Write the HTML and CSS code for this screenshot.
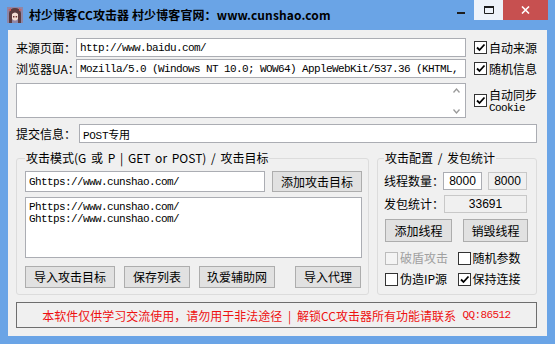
FILE: index.html
```html
<!DOCTYPE html>
<html lang="zh-CN">
<head>
<meta charset="UTF-8">
<title>村少博客CC攻击器</title>
<link rel="stylesheet" href="styles.css">
</head>
<body>
<div class="window">
  <div class="titlebar">
    <svg class="app-icon" viewBox="0 0 16 16">
      <rect width="16" height="16" fill="#8f86a6"/>
      <path d="M2 16 L2 6 Q3 1 8 1 Q13 1 14 6 L14 16 L11 16 L11 8 L5 8 L5 16 Z" fill="#5b3b3e"/>
      <path d="M5 7 Q8 4 11 7 L11 12 Q8 15 5 12 Z" fill="#f3dcd2"/>
      <rect x="6" y="9" width="1.5" height="1.5" fill="#6a3030"/>
      <rect x="8.6" y="9" width="1.5" height="1.5" fill="#6a3030"/>
      <path d="M1 3 L4 1 L4 4 Z" fill="#d65a5a"/>
      <path d="M12 1 L15 3 L12 4 Z" fill="#d65a5a"/>
    </svg>
    <span class="title">村少博客CC攻击器 村少博客官网：www.cunshao.com</span>
    <div class="caption">
      <div class="cap-btn cap-min">
        <svg width="8" height="2" viewBox="0 0 8 2"><rect width="8" height="2" fill="#1e1e1e"/></svg>
      </div>
      <div class="cap-btn cap-max">
        <svg width="10" height="8" viewBox="0 0 10 8"><path d="M0.5 1 H9.5 V7.5 H0.5 Z" fill="none" stroke="#1e1e1e"/><rect width="10" height="2" fill="#1e1e1e"/></svg>
      </div>
      <div class="cap-btn cap-close">
        <svg width="9" height="8" viewBox="0 0 9 8"><path d="M1 0.5 L8 7.5 M8 0.5 L1 7.5" stroke="#fff" stroke-width="1.6"/></svg>
      </div>
    </div>
  </div>

  <div class="client">
    <div class="field-row">
      <span class="label">来源页面：</span>
      <input class="text-input mono" type="text" value="http://www.baidu.com/">
      <label class="check">
        <span class="box"><svg viewBox="0 0 11 11"><path d="M2 5.5 L4.5 8 L9.5 2.5" fill="none" stroke="#000" stroke-width="1.8"/></svg></span>
        <span class="check-text">自动来源</span>
      </label>
    </div>
    <div class="field-row">
      <span class="label">浏览器UA：</span>
      <input class="text-input mono" type="text" value="Mozilla/5.0 (Windows NT 10.0; WOW64) AppleWebKit/537.36 (KHTML, like Gecko) Chrome/55.0.2883.87 Safari/537.36">
      <label class="check">
        <span class="box"><svg viewBox="0 0 11 11"><path d="M2 5.5 L4.5 8 L9.5 2.5" fill="none" stroke="#000" stroke-width="1.8"/></svg></span>
        <span class="check-text">随机信息</span>
      </label>
    </div>
    <div class="cookie-row">
      <div class="memo">
        <div class="memo-body"></div>
        <div class="memo-scroll">
          <svg width="7" height="5" viewBox="0 0 7 5"><path d="M0.5 4.5 L3.5 1 L6.5 4.5" fill="none" stroke="#9a9a9a" stroke-width="1.3"/></svg>
          <svg width="7" height="5" viewBox="0 0 7 5"><path d="M0.5 0.5 L3.5 4 L6.5 0.5" fill="none" stroke="#9a9a9a" stroke-width="1.3"/></svg>
        </div>
      </div>
      <label class="check">
        <span class="box"><svg viewBox="0 0 11 11"><path d="M2 5.5 L4.5 8 L9.5 2.5" fill="none" stroke="#000" stroke-width="1.8"/></svg></span>
        <span class="check-text two-line"><span class="main">自动同步</span><span class="mono sub">Cookie</span></span>
      </label>
    </div>
    <div class="field-row submit-row">
      <span class="label label-wide">提交信息：</span>
      <input class="text-input submit-input" type="text" value="POST专用">
    </div>

    <div class="groups">
      <fieldset class="group group-target">
        <legend>攻击模式(G 或 P | GET or POST) / 攻击目标</legend>
        <div class="target-row">
          <input class="text-input mono target-input" type="text" value="Ghttps://www.cunshao.com/">
          <button class="btn btn-add">添加攻击目标</button>
        </div>
        <div class="target-list mono">
          <div>Phttps://www.cunshao.com/</div>
          <div>Ghttps://www.cunshao.com/</div>
        </div>
        <div class="target-actions">
          <button class="btn btn-import">导入攻击目标</button>
          <button class="btn btn-save">保存列表</button>
          <button class="btn btn-site">玖爱辅助网</button>
          <button class="btn btn-proxy">导入代理</button>
        </div>
      </fieldset>

      <fieldset class="group group-config">
        <legend>攻击配置 / 发包统计</legend>
        <div class="config-row">
          <span class="label label-thread">线程数量：</span>
          <input class="num-input" type="text" value="8000">
          <input class="num-input readonly" type="text" value="8000" readonly>
        </div>
        <div class="config-row stat-row">
          <span class="label label-thread">发包统计：</span>
          <input class="num-input readonly stat-input" type="text" value="33691" readonly>
        </div>
        <div class="thread-actions">
          <button class="btn btn-thread">添加线程</button>
          <button class="btn btn-destroy">销毁线程</button>
        </div>
        <div class="option-row">
          <label class="check opt disabled">
            <span class="box"></span>
            <span class="check-text">破盾攻击</span>
          </label>
          <label class="check opt">
            <span class="box"></span>
            <span class="check-text">随机参数</span>
          </label>
        </div>
        <div class="option-row">
          <label class="check opt">
            <span class="box"></span>
            <span class="check-text">伪造IP源</span>
          </label>
          <label class="check opt">
            <span class="box"><svg viewBox="0 0 11 11"><path d="M2 5.5 L4.5 8 L9.5 2.5" fill="none" stroke="#000" stroke-width="1.8"/></svg></span>
            <span class="check-text">保持连接</span>
          </label>
        </div>
      </fieldset>
    </div>

    <div class="notice">本软件仅供学习交流使用，请勿用于非法途径 | 解锁CC攻击器所有功能请联系 <span class="mono qq">QQ:86512</span></div>
  </div>
</div>
</body>
</html>
```

FILE: styles.css
```css
* {
    box-sizing: border-box;
}
body {
    margin: 0;
    font-family: "Noto Sans CJK SC", "Noto Sans", sans-serif;
    font-size: 12px;
    color: #000;
}
.window {
    width: 555px;
    height: 344px;
    background: #6aa4e6;
    display: flex;
    flex-direction: column;
}

/* 标题栏 */
.titlebar {
    height: 30px;
    display: flex;
    align-items: flex-start;
}
.app-icon {
    width: 16px;
    height: 16px;
    margin: 7px 0 0 7px;
    flex: none;
}
.title {
    flex: 1;
    margin: 6px 0 0 6px;
    font-weight: 700;
    line-height: 18px;
    white-space: nowrap;
    letter-spacing: 0.1px;
}
.caption {
    display: flex;
    margin-right: 7px;
}
.cap-btn {
    height: 20px;
    display: flex;
    align-items: center;
    justify-content: center;
}
.cap-btn svg {
    display: block;
}
.cap-min {
    width: 26px;
    padding-top: 5px;
}
.cap-max {
    width: 29px;
    background: #eef3fa;
}
.cap-close {
    width: 45px;
    background: #c75050;
}

/* 客户区 */
.client {
    flex: 1;
    margin: 0 8px 8px;
    background: #f0f0f0;
    padding: 8px 10px 8px 8px;
    display: flex;
    flex-direction: column;
}
.mono {
    font-family: "Liberation Mono", monospace;
    font-size: 11px;
    letter-spacing: -0.6px;
}
.field-row {
    display: flex;
    align-items: center;
    height: 19px;
}
.field-row + .field-row {
    margin-top: 2px;
}
.label {
    width: 60px;
    flex: none;
    white-space: nowrap;
    line-height: 14px;
}
.label-wide {
    width: 63px;
}
.text-input {
    width: 391px;
    height: 19px;
    margin: 0;
    border: 1px solid #abadb3;
    background: #fff;
    padding: 0 3px;
    outline: none;
    color: #000;
}
.submit-input {
    width: 458px;
    font-family: "Liberation Mono", "Noto Sans CJK SC", monospace;
    font-size: 11px;
    letter-spacing: -0.3px;
}
.submit-row {
    margin-top: 6px;
}

/* 复选框 */
.check {
    display: flex;
    align-items: center;
    margin-left: 8px;
    white-space: nowrap;
}
.box {
    width: 13px;
    height: 13px;
    flex: none;
    border: 1px solid #333;
    background: #fff;
    display: flex;
    align-items: center;
    justify-content: center;
}
.box svg {
    width: 11px;
    height: 11px;
    display: block;
}
.check-text {
    margin-left: 2px;
    line-height: 14px;
}
.two-line {
    display: flex;
    flex-direction: column;
}
.two-line .main {
    line-height: 13px;
}
.two-line .sub {
    line-height: 10px;
    margin-top: 2px;
}
.disabled .box {
    border-color: #bcbcbc;
    background: #f4f4f4;
}
.disabled .check-text {
    color: #a0a0a0;
}

/* Cookie 文本框 */
.cookie-row {
    display: flex;
    align-items: center;
    margin-top: 5px;
    height: 35px;
}
.memo {
    width: 451px;
    height: 35px;
    border: 1px solid #abadb3;
    background: #fff;
    display: flex;
}
.memo-body {
    flex: 1;
}
.memo-scroll {
    width: 17px;
    padding: 4px 0 3px;
    display: flex;
    flex-direction: column;
    justify-content: space-between;
    align-items: center;
}
.memo-scroll svg {
    display: block;
}

/* 分组框 */
.groups {
    display: flex;
    gap: 8px;
    margin-top: 7px;
}
.group {
    margin: 0;
    border: 1px solid #dcdcdc;
    border-radius: 3px;
    min-width: 0;
}
.group legend {
    padding: 0 1px;
    line-height: 16px;
    white-space: nowrap;
    word-spacing: 2px;
}
.group-target {
    width: 353px;
    padding: 5px 6px 6px 8px;
}
.group-config {
    width: 160px;
    padding: 6px 6px 7px 6px;
}
.btn {
    margin: 0;
    padding: 0;
    border: 1px solid #adadad;
    background: #e1e1e1;
    font-family: "Noto Sans CJK SC", sans-serif;
    font-size: 12px;
    color: #000;
    line-height: 14px;
}
.target-row {
    display: flex;
    gap: 7px;
}
.target-input {
    width: 240px;
    height: 21px;
}
.btn-add {
    width: 90px;
    height: 21px;
}
.target-list {
    margin-top: 5px;
    height: 61px;
    border: 1px solid #abadb3;
    background: #fff;
    padding: 3px 3px;
    line-height: 12px;
}
.target-actions {
    display: flex;
    margin-top: 8px;
}
.target-actions .btn {
    height: 22px;
}
.btn-import {
    width: 90px;
}
.btn-save {
    width: 66px;
    margin-left: 9px;
}
.btn-site {
    width: 76px;
    margin-left: 9px;
}
.btn-proxy {
    width: 66px;
    margin-left: 20px;
}
.config-row {
    display: flex;
    align-items: center;
    height: 18px;
}
.label-thread {
    width: 59px;
}
.stat-row {
    margin-top: 5px;
}
.stat-row .label-thread {
    width: 60px;
}
.num-input {
    width: 39px;
    height: 18px;
    margin: 0;
    padding: 0;
    border: 1px solid #abadb3;
    background: #fff;
    font-family: "Liberation Sans", Arial, sans-serif;
    font-size: 12px;
    text-align: center;
    color: #000;
    outline: none;
}
.num-input + .num-input {
    margin-left: 6px;
}
.readonly {
    background: #f0f0f0;
    border-color: #c8c8c8;
}
.stat-input {
    width: 83px;
}
.thread-actions {
    display: flex;
    margin-top: 6px;
    padding-left: 1px;
}
.thread-actions .btn {
    height: 23px;
}
.btn-thread {
    width: 67px;
}
.btn-destroy {
    width: 65px;
    margin-left: 11px;
}
.option-row {
    display: flex;
    height: 16px;
    margin-top: 8px;
    padding-left: 1px;
}
.option-row + .option-row {
    margin-top: 5px;
}
.opt {
    margin-left: 0;
    width: 78px;
}

/* 底部提示 */
.notice {
    margin-top: 7px;
    height: 26px;
    border: 1px solid #6e6e6e;
    display: flex;
    align-items: center;
    justify-content: center;
    color: #ee1111;
    white-space: pre;
    word-spacing: 3px;
}
.qq {
    margin-left: 1px;
}
```
